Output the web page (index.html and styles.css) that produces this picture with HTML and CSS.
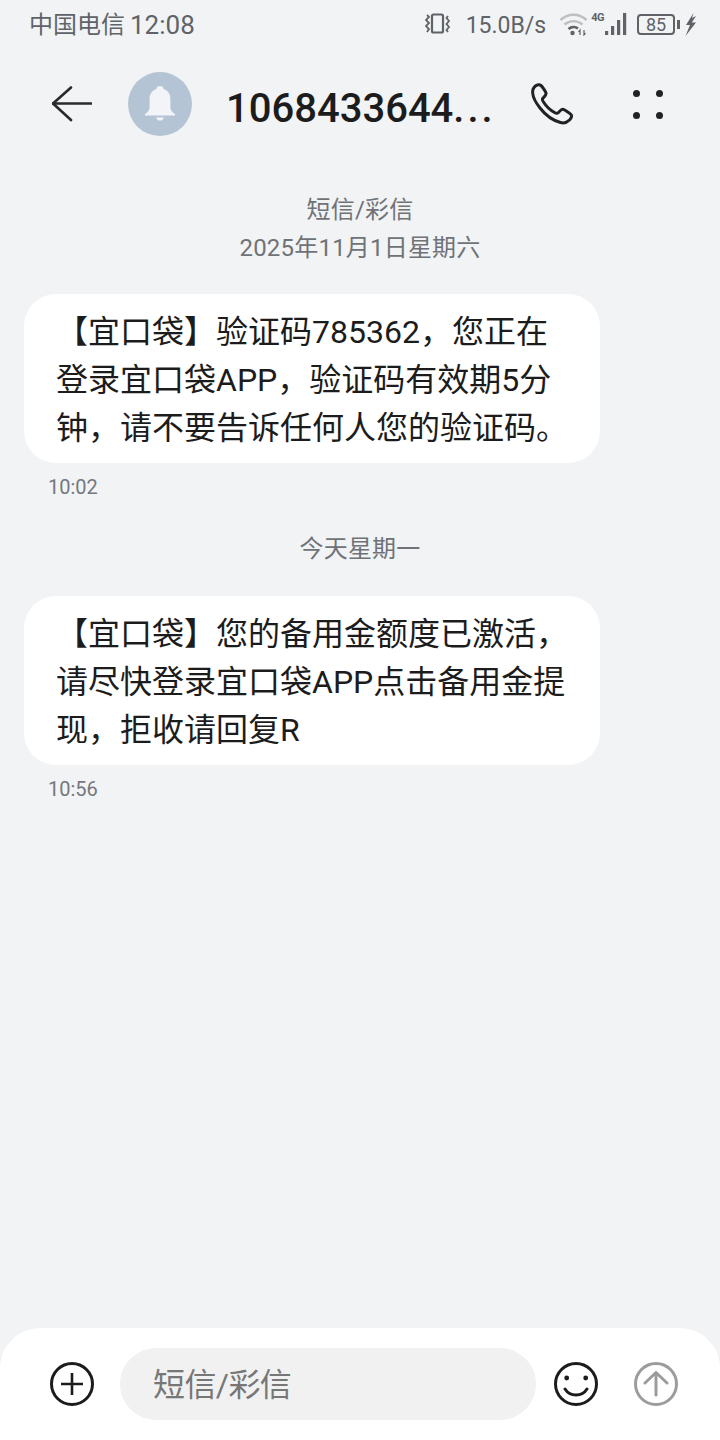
FILE: index.html
```html
<!DOCTYPE html>
<html>
	<head>
		<meta charset="UTF-8">
		<title>短信/彩信</title>
		<link rel="stylesheet" href="styles.css">
	</head>

	<body>
		<div class='status-bar'>
			<div class='carrier'><span class='carrier-name'>中国电信</span><span class='clock'>12:08</span></div>
			<div class='status-icons'>
				<svg class='ic-vibrate' width='26' height='22' viewBox='0 0 26 22' fill='none' stroke='#5f6368'>
					<rect x='7' y='1.5' width='11' height='18' rx='1.5' stroke-width='2.2'/>
					<path d='M2 2 L4 4 L1 7 L4 10 L1 13 L4 16 L2 19' stroke-width='1.8'/>
					<path d='M23 3 L21.5 5 L24 8 L21.5 11 L24 14 L21.5 17 L23 19' stroke-width='1.8'/>
				</svg>
				<span class='speed'>15.0B/s</span>
				<svg class='ic-wifi' width='30' height='24' viewBox='0 0 30 24' fill='none'>
					<path d='M1.5 8 C9 1 20 1 27.5 8' stroke='#bdbfc2' stroke-width='2.4'/>
					<path d='M5.5 12.5 C11 8 18 8 23.5 12.5' stroke='#bdbfc2' stroke-width='2.4'/>
					<path d='M9.5 17 C12.5 14.5 16.5 14.5 19 16.5' stroke='#5f6368' stroke-width='2.6'/>
					<circle cx='13.5' cy='21' r='2.2' fill='#5f6368'/>
					<path d='M21 18 L21 22.5 M19.5 20 L21 18 L21 23 M25 18 L25 23 L26.5 21' stroke='#5f6368' stroke-width='1.2'/>
				</svg>
				<div class='signal'>
					<span class='net'>4G</span>
					<svg width='24' height='24' viewBox='0 0 24 24' fill='#5f6368'>
						<rect x='1' y='19' width='3.2' height='4'/>
						<rect x='7' y='14' width='3.2' height='9'/>
						<rect x='13' y='8' width='3.2' height='15'/>
						<rect x='19' y='1' width='3.2' height='22'/>
					</svg>
				</div>
				<div class='battery'>
					<span class='battery-box'>85</span>
					<span class='battery-nub'></span>
				</div>
				<svg class='ic-bolt' width='12' height='23' viewBox='0 0 12 23' fill='#5f6368'>
					<path d='M8.5 0 L1 12 L5 12 L0.5 23 L11 9.5 L6.8 9.5 L11 3 L7 5 Z'/>
				</svg>
			</div>
		</div>

		<div class='header'>
			<svg class='back' width='40' height='36' viewBox='0 0 40 36' fill='none' stroke='#2a2a2a' stroke-width='2.6' stroke-linecap='round' stroke-linejoin='round'>
				<path d='M19 1.5 L1 17.5 L19 34'/>
				<path d='M1 17.5 L39 17.5'/>
			</svg>
			<div class='avatar'>
				<svg width='32' height='36' viewBox='0 0 32 36' fill='#f2f4f7'>
					<path d='M16 0 C18 0 19.4 1.2 19.6 3 C24.5 4.6 26.4 8.6 26.4 13 L26.4 21 C26.4 24 27.6 26 31 28 L31 29.5 L1 29.5 L1 28 C4.4 26 5.6 24 5.6 21 L5.6 13 C5.6 8.6 7.5 4.6 12.4 3 C12.6 1.2 14 0 16 0 Z'/>
					<path d='M12 31.5 L20 31.5 C19.4 33.6 18 34.6 16 34.6 C14 34.6 12.6 33.6 12 31.5 Z'/>
				</svg>
			</div>
			<div class='title'>1068433644<span class='title-dots'>...</span></div>
			<svg class='ic-phone' width='42' height='42' viewBox='0 0 42 42' fill='none' stroke='#222' stroke-width='3' stroke-linejoin='round'>
				<path d='M3 4.5 C5 2 8 1 10 2.5 C11.5 3.8 14.5 8.5 15 10 C15.6 12 13.5 13.5 12 15 C11 16 11.5 17.5 12.5 19 C15 23 19 27 23.5 29.5 C25 30.4 26.5 30.5 27.5 29.5 C29 28 30 26 32 26.3 C33.5 26.5 38.5 30 40 31.5 C41 33 40 35.5 38.5 37 C36 39.5 33 40.5 29.5 39.5 C22 37.5 14 31.5 9 25 C5 20 2 14.5 1.7 10 C1.5 8 1.8 6 3 4.5 Z'/>
			</svg>
			<div class='more'>
				<span></span><span></span><span></span><span></span>
			</div>
		</div>

		<div class='messages'>
			<div class='day-label day-first'>短信/彩信</div>
			<div class='day-label'>2025年11月1日星期六</div>
			<div class='bubble'>【宜口袋】验证码785362，您正在登录宜口袋APP，验证码有效期5分钟，请不要告诉任何人您的验证码。</div>
			<div class='time'>10:02</div>
			<div class='day-label day-today'>今天星期一</div>
			<div class='bubble'>【宜口袋】您的备用金额度已激活，请尽快登录宜口袋APP点击备用金提现，拒收请回复R</div>
			<div class='time'>10:56</div>
		</div>

		<div class='composer'>
			<svg width='44' height='44' viewBox='0 0 44 44' fill='none' stroke='#1c1c1c' stroke-width='3'>
				<circle cx='22' cy='22' r='20.5'/>
				<path d='M11 22 L33 22 M22 11 L22 33' stroke-width='2.6'/>
			</svg>
			<div class='input'>短信/彩信</div>
			<svg width='44' height='44' viewBox='0 0 44 44' fill='none' stroke='#1c1c1c' stroke-width='3'>
				<circle cx='22' cy='22' r='20.5'/>
				<circle cx='12.7' cy='16' r='2.4' fill='#1c1c1c' stroke='none'/>
				<circle cx='31.7' cy='16' r='2.4' fill='#1c1c1c' stroke='none'/>
				<path d='M11 27 C16 35 28 35 33 27' stroke-linecap='round'/>
			</svg>
			<svg width='44' height='44' viewBox='0 0 44 44' fill='none' stroke='#9c9c9c' stroke-width='3'>
				<circle cx='22' cy='22' r='20.5'/>
				<path d='M22 33 L22 10.5 M11 21 L22 10.5 L33 21' stroke-linecap='round' stroke-linejoin='round'/>
			</svg>
		</div>
	</body>
</html>
```

FILE: styles.css
```css
body {
	margin: 0;
	width: 720px;
	height: 1440px;
	background-color: #F1F3F5;
	font-family: Roboto, "Noto Sans CJK SC", sans-serif;
	display: flex;
	flex-direction: column;
	overflow: hidden;
}

.status-bar {
	height: 48px;
	padding: 0 23px 0 29px;
	margin-bottom: 2px;
	display: flex;
	align-items: center;
	justify-content: space-between;
	color: #5F6368;
}

.carrier {
	display: flex;
	align-items: center;
	padding-top: 2px;
}

.carrier-name {
	font-size: 24px;
	line-height: 32px;
}

.clock {
	font-size: 26px;
	line-height: 32px;
	margin-left: 5px;
}

.status-icons {
	display: flex;
	align-items: center;
}

.speed {
	font-size: 23px;
	margin-left: 15px;
	margin-right: 13px;
	padding-top: 2px;
}

.signal {
	display: flex;
	align-items: flex-start;
	margin-left: 2px;
}

.signal .net {
	font-size: 11px;
	font-weight: 700;
	letter-spacing: -0.5px;
	line-height: 12px;
}

.battery {
	display: flex;
	align-items: center;
	margin-left: 9px;
}

.battery-box {
	width: 38px;
	height: 21px;
	box-sizing: border-box;
	border: 2px solid #5F6368;
	border-radius: 4px;
	font-size: 18px;
	line-height: 17px;
	text-align: center;
}

.battery-nub {
	width: 3px;
	height: 9px;
	margin-left: 2px;
	background-color: #5F6368;
}

.ic-bolt {
	margin-left: 5px;
}

.header {
	height: 108px;
	padding-left: 52px;
	display: flex;
	align-items: center;
}

.avatar {
	width: 64px;
	height: 64px;
	margin-left: 36px;
	border-radius: 50%;
	background-color: #B4C4D4;
	display: flex;
	align-items: center;
	justify-content: center;
}

.title {
	width: 305px;
	margin-left: 34px;
	padding-top: 9px;
	font-size: 40px;
	font-weight: 500;
	color: #1C1C1C;
	white-space: nowrap;
}

.title-dots {
	letter-spacing: 3px;
}

.more {
	width: 30px;
	margin-left: 60px;
	display: grid;
	grid-template-columns: 7px 7px;
	justify-content: space-between;
	row-gap: 15px;
}

.more span {
	height: 7px;
	border-radius: 50%;
	background-color: #222;
}

.messages {
	flex: 1;
	padding: 0 24px;
}

.day-label {
	font-size: 24px;
	line-height: 38px;
	letter-spacing: 0.2px;
	text-align: center;
	color: #6F7276;
}

.day-first {
	margin-top: 33px;
}

.day-today {
	margin-top: 30px;
	margin-bottom: 28px;
}

.bubble {
	width: 576px;
	box-sizing: border-box;
	margin-top: 27px;
	padding: 14px 28px 11px 32px;
	background-color: #FFF;
	border-radius: 32px;
	font-size: 32px;
	line-height: 48px;
	color: #1C1C1C;
}

.day-today + .bubble {
	margin-top: 0;
}

.time {
	margin: 11px 0 0 24px;
	font-size: 20px;
	line-height: 26px;
	color: #75787C;
}

.composer {
	height: 112px;
	padding: 0 42px 0 50px;
	box-sizing: border-box;
	background-color: #FFF;
	border-radius: 40px 40px 0 0;
	display: flex;
	align-items: center;
}

.input {
	width: 416px;
	height: 72px;
	box-sizing: border-box;
	margin: 0 18px 0 26px;
	padding: 1px 0 0 33px;
	background-color: #F1F1F1;
	border-radius: 36px;
	font-size: 32px;
	letter-spacing: -0.6px;
	line-height: 72px;
	color: #777;
}

.composer svg:last-child {
	margin-left: 36px;
}
```
